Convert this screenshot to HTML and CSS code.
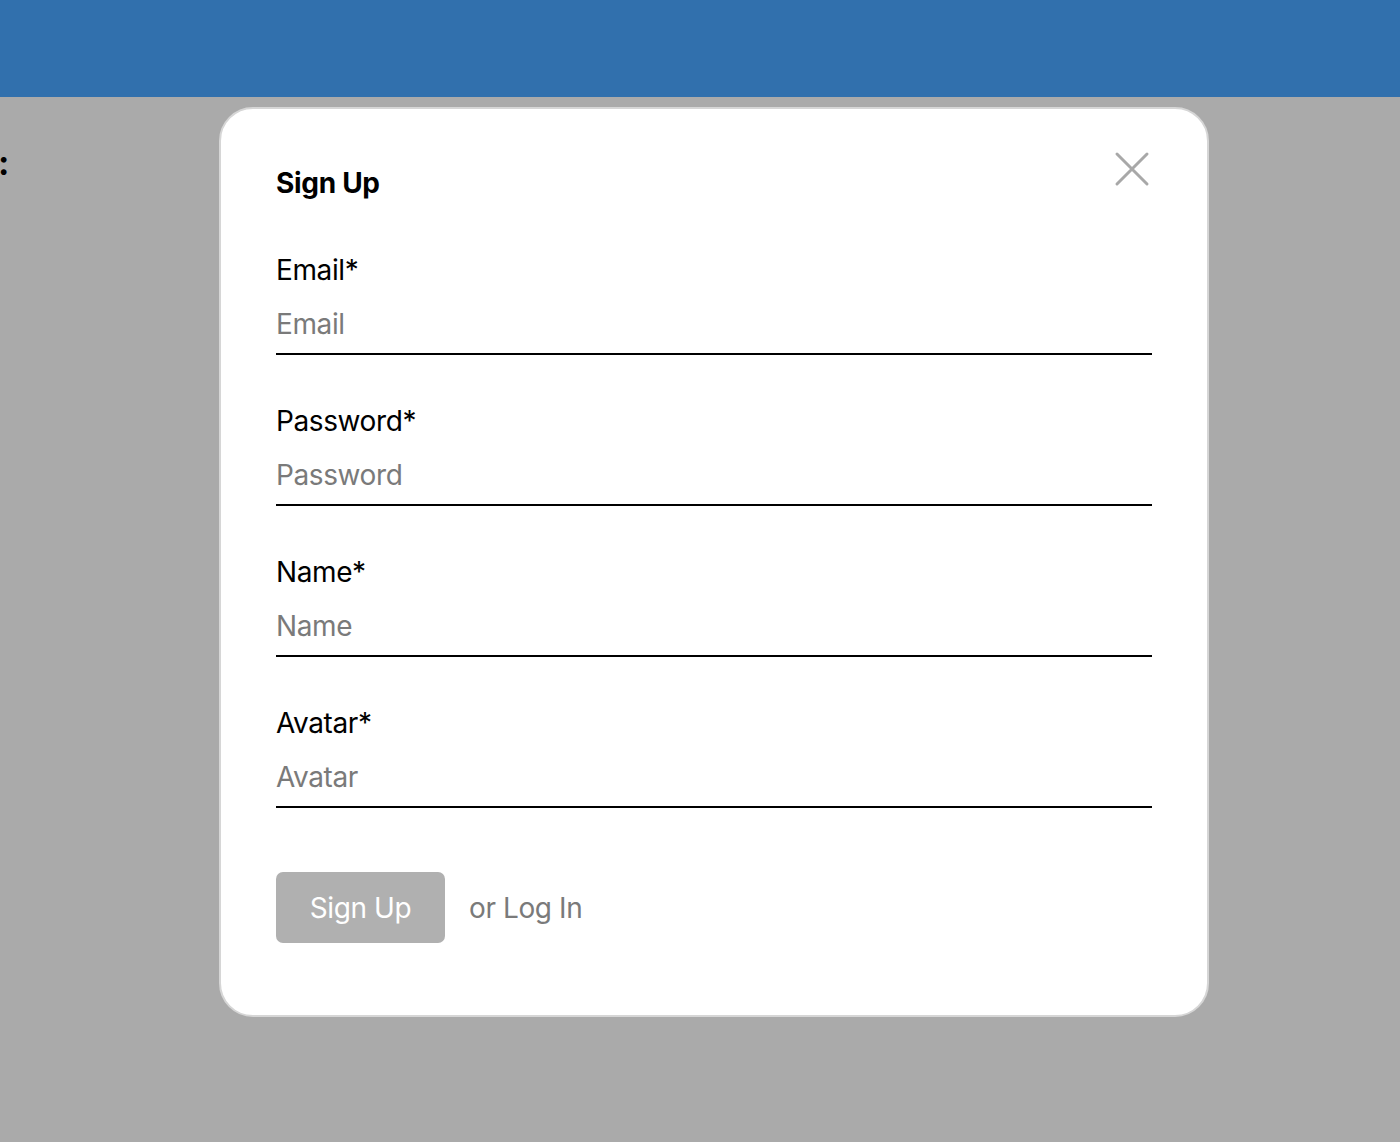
FILE: index.html
```html
<!DOCTYPE html>
<html lang="en">
<head>
<meta charset="utf-8">
<title>Sign Up</title>
<link rel="stylesheet" href="styles.css">
</head>
<body>
<header class="topbar"></header>
<main class="page">
  <h1 class="page-title">:</h1>
</main>
<div class="overlay">
  <div class="modal" role="dialog" aria-labelledby="modal-title">
    <button class="close" aria-label="Close">
      <svg width="36" height="36" viewBox="0 0 36 36"><path d="M3 3 L33 33 M33 3 L3 33" stroke="#a8a8a8" stroke-width="3" stroke-linecap="round" fill="none"/></svg>
    </button>
    <h2 class="modal-title" id="modal-title">Sign Up</h2>
    <form class="form">
      <label class="field">
        <span class="label">Email*</span>
        <input class="input" type="email" placeholder="Email">
      </label>
      <label class="field">
        <span class="label">Password*</span>
        <input class="input" type="password" placeholder="Password">
      </label>
      <label class="field">
        <span class="label">Name*</span>
        <input class="input" type="text" placeholder="Name">
      </label>
      <label class="field">
        <span class="label">Avatar*</span>
        <input class="input" type="text" placeholder="Avatar">
      </label>
      <div class="actions">
        <button class="submit" type="button" disabled>Sign Up</button>
        <a class="alt-link">or Log In</a>
      </div>
    </form>
  </div>
</div>
</body>
</html>
```
FILE: styles.css
```css
* { box-sizing: border-box; }
html, body { margin: 0; padding: 0; }
body {
  background: #ffffff;
  font-family: Inter, "Liberation Sans", sans-serif;
  height: 1142px;
  overflow: hidden;
}
.topbar {
  position: relative;
  z-index: 2;
  height: 97px;
  background: #3170ad;
}
.page {
  padding: 46px 0 0 0;
}
.page-title {
  margin: 0 0 0 -2px;
  font-size: 34px;
  line-height: 40px;
  font-weight: 700;
  color: #000;
}
.overlay {
  position: fixed;
  inset: 0;
  background: rgba(0, 0, 0, 0.333);
  display: flex;
  justify-content: center;
  align-items: flex-start;
  padding-top: 107px;
}
.modal {
  position: relative;
  width: 990px;
  height: 910px;
  background: #ffffff;
  border: 2px solid #d6d6d6;
  border-radius: 34px;
  padding: 50px 55px 0 55px;
  margin-left: 28px;
}
.close {
  position: absolute;
  top: 42px;
  right: 57px;
  background: none;
  border: 0;
  padding: 0;
  width: 36px;
  height: 36px;
  cursor: pointer;
}
.close svg { display: block; }
.modal-title {
  margin: 0;
  font-size: 28px;
  font-weight: 700;
  line-height: 48px;
  letter-spacing: -0.3px;
  color: #000;
}
.form {
  display: flex;
  flex-direction: column;
  margin-top: 46px;
}
.field {
  display: flex;
  flex-direction: column;
  margin-bottom: 49px;
}
.label {
  font-size: 28px;
  line-height: 34px;
  color: #000;
  letter-spacing: -0.4px;
}
.input {
  margin-top: 16px;
  border: 0;
  border-bottom: 2px solid #000;
  font-family: inherit;
  font-size: 28px;
  line-height: 34px;
  padding: 4px 0 12px 0;
  color: #000;
  background: transparent;
  outline: none;
  letter-spacing: -0.4px;
}
.input::placeholder { color: #7a7a7a; }
.actions {
  display: flex;
  align-items: center;
  gap: 24px;
  margin-top: 15px;
}
.submit {
  width: 169px;
  height: 71px;
  border: 0;
  border-radius: 7px;
  background: #b0b0b0;
  color: #ffffff;
  font-family: inherit;
  font-size: 28px;
  letter-spacing: -0.4px;
  padding: 0;
}
.alt-link {
  font-size: 28px;
  color: #7a7a7a;
  letter-spacing: -0.4px;
}
```
